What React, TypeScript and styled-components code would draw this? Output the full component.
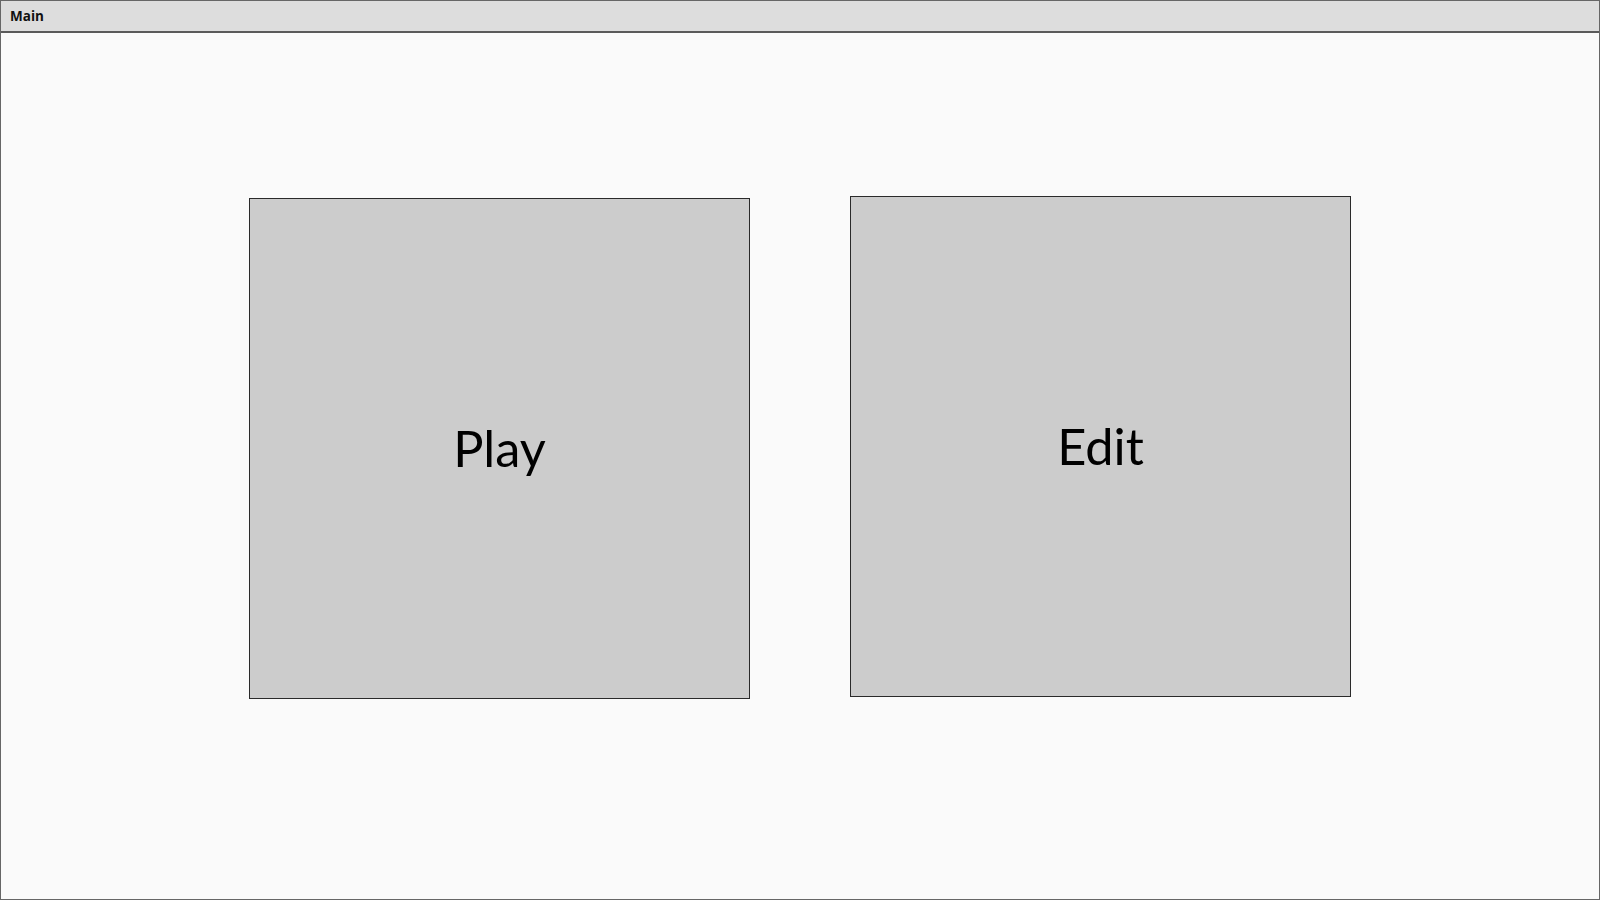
import { FC } from "react";
import styled, { createGlobalStyle } from "styled-components";

const GlobalStyle = createGlobalStyle`
  html, body {
    margin: 0;
    padding: 0;
    background: #fafafa;
  }
  * {
    box-sizing: border-box;
  }
`;

const Window = styled.div`
  width: 1600px;
  height: 900px;
  border: 1px solid #666;
  background: #fafafa;
  display: flex;
  flex-direction: column;
`;

const TitleBar = styled.div`
  height: 32px;
  flex: none;
  display: flex;
  align-items: center;
  padding-left: 9px;
  background: #dddddd;
  border-bottom: 2px solid #5a5a5a;
  font-family: "Open Sans", "Liberation Sans", sans-serif;
  font-weight: 700;
  font-size: 13.5px;
  color: #111;
`;

const Content = styled.div`
  flex: 1;
  display: flex;
  justify-content: center;
  align-items: flex-start;
  gap: 100px;
  padding-top: 163px;
`;

const Tile = styled.button<{ $drop?: number }>`
  width: 501px;
  height: 501px;
  margin-top: ${(p) => p.$drop ?? 0}px;
  display: flex;
  align-items: center;
  justify-content: center;
  background: #cccccc;
  border: 1px solid #2a2a2a;
  padding: 0 0 2px;
  cursor: pointer;
  font-family: Lato, "Open Sans", sans-serif;
  font-size: 50.5px;
  font-weight: 400;
  color: #000;
`;

const App: FC = () => {
  return (
    <>
      <GlobalStyle />
      <Window>
        <TitleBar>Main</TitleBar>
        <Content>
          <Tile $drop={2}>Play</Tile>
          <Tile>Edit</Tile>
        </Content>
      </Window>
    </>
  );
};

export default App;
